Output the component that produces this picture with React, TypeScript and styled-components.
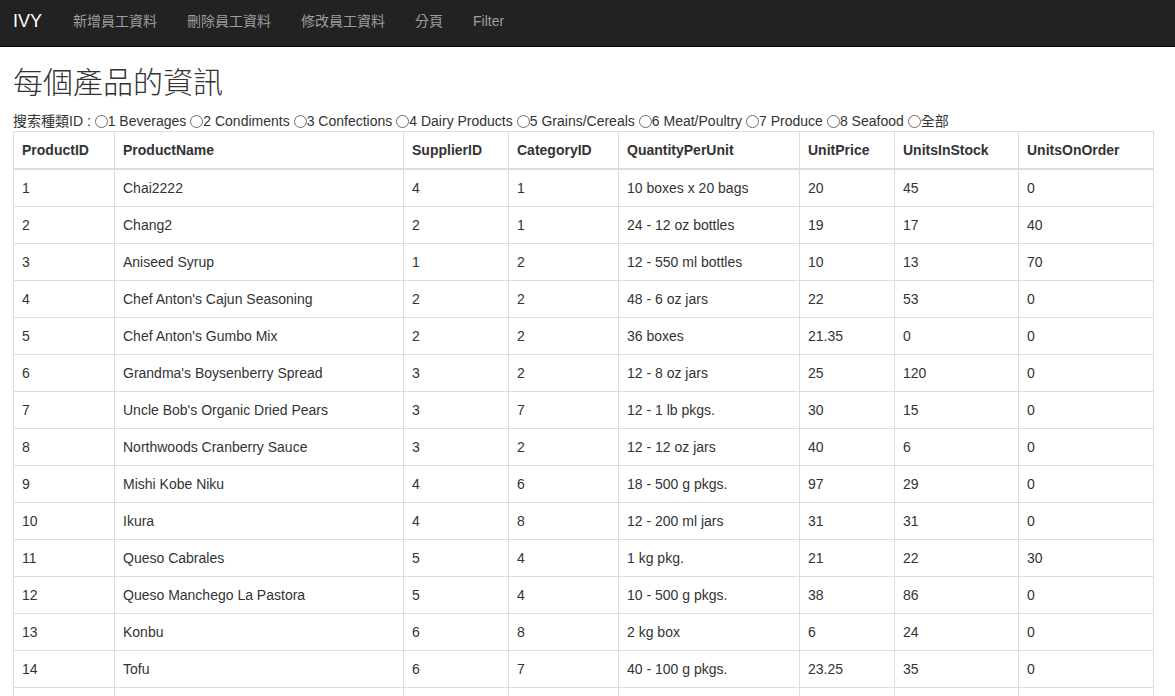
import React from "react";
import styled, { createGlobalStyle } from "styled-components";

const GlobalStyle = createGlobalStyle`
  html, body { margin: 0; padding: 0; background: #fff; }
  body {
    font-family: "Liberation Sans", Arial, "Noto Sans CJK TC", sans-serif;
    font-size: 14px;
    line-height: 1.42857;
    color: #333;
  }
  * { box-sizing: border-box; }
`;

const Navbar = styled.nav`
  height: 47px;
  background: #222;
  border-bottom: 1px solid #080808;
  display: flex;
  align-items: flex-start;
  padding-left: 13px;
`;

const Brand = styled.a`
  font-size: 18px;
  line-height: 20px;
  padding-top: 11px;
  color: #fff;
  text-decoration: none;
  margin-right: 16px;
`;

const NavLink = styled.a`
  font-size: 14px;
  line-height: 20px;
  padding: 11px 15px 0;
  color: #9d9d9d;
  text-decoration: none;
  font-family: "Liberation Sans", Arial, "Noto Sans CJK TC", sans-serif;
`;

const Content = styled.main`
  padding: 0 13px;
`;

const Title = styled.h1`
  margin: 17px 0 0;
  font-size: 30px;
  font-weight: 300;
  line-height: 33px;
  font-family: "Noto Sans CJK TC", sans-serif;
  color: #333;
`;

const FilterRow = styled.div`
  margin-top: 15px;
  height: 20px;
  display: flex;
  align-items: center;
  white-space: nowrap;
  font-size: 14px;
  color: #333;
`;

const Radio = styled.input.attrs({ type: "radio" })`
  appearance: none;
  -webkit-appearance: none;
  width: 13px;
  height: 13px;
  margin: 0;
  border: 1px solid #6b6b6b;
  border-radius: 50%;
  background: #fff;
  flex: none;
`;

const Option = styled.label`
  display: inline-flex;
  align-items: center;
  margin-right: 4px;
`;

const Table = styled.table`
  width: 1140px;
  border-collapse: collapse;
  table-layout: fixed;
  border: 1px solid #ddd;
  margin-top: -1px;
`;

const Th = styled.th`
  text-align: left;
  font-weight: 700;
  padding: 8px;
  line-height: 20px;
  border: 1px solid #ddd;
  border-bottom: 2px solid #ddd;
  color: #333;
`;

const Td = styled.td`
  padding: 8px;
  line-height: 20px;
  border: 1px solid #ddd;
  color: #333;
  white-space: nowrap;
`;

const widths = [101, 289, 105, 110, 181, 95, 124, 135];
const headers = [
  "ProductID",
  "ProductName",
  "SupplierID",
  "CategoryID",
  "QuantityPerUnit",
  "UnitPrice",
  "UnitsInStock",
  "UnitsOnOrder",
];

const rows: (string | number)[][] = [
  [1, "Chai2222", 4, 1, "10 boxes x 20 bags", "20", 45, 0],
  [2, "Chang2", 2, 1, "24 - 12 oz bottles", "19", 17, 40],
  [3, "Aniseed Syrup", 1, 2, "12 - 550 ml bottles", "10", 13, 70],
  [4, "Chef Anton's Cajun Seasoning", 2, 2, "48 - 6 oz jars", "22", 53, 0],
  [5, "Chef Anton's Gumbo Mix", 2, 2, "36 boxes", "21.35", 0, 0],
  [6, "Grandma's Boysenberry Spread", 3, 2, "12 - 8 oz jars", "25", 120, 0],
  [7, "Uncle Bob's Organic Dried Pears", 3, 7, "12 - 1 lb pkgs.", "30", 15, 0],
  [8, "Northwoods Cranberry Sauce", 3, 2, "12 - 12 oz jars", "40", 6, 0],
  [9, "Mishi Kobe Niku", 4, 6, "18 - 500 g pkgs.", "97", 29, 0],
  [10, "Ikura", 4, 8, "12 - 200 ml jars", "31", 31, 0],
  [11, "Queso Cabrales", 5, 4, "1 kg pkg.", "21", 22, 30],
  [12, "Queso Manchego La Pastora", 5, 4, "10 - 500 g pkgs.", "38", 86, 0],
  [13, "Konbu", 6, 8, "2 kg box", "6", 24, 0],
  [14, "Tofu", 6, 7, "40 - 100 g pkgs.", "23.25", 35, 0],
  [15, "Genen Shouyu", 6, 2, "24 - 250 ml bottles", "15.5", 39, 0],
];

const categories = [
  "1 Beverages",
  "2 Condiments",
  "3 Confections",
  "4 Dairy Products",
  "5 Grains/Cereals",
  "6 Meat/Poultry",
  "7 Produce",
  "8 Seafood",
  "全部",
];

export default function App() {
  return (
    <>
      <GlobalStyle />
      <Navbar>
        <Brand href="#">IVY</Brand>
        <NavLink href="#">新增員工資料</NavLink>
        <NavLink href="#">刪除員工資料</NavLink>
        <NavLink href="#">修改員工資料</NavLink>
        <NavLink href="#">分頁</NavLink>
        <NavLink href="#">Filter</NavLink>
      </Navbar>
      <Content>
        <Title>每個產品的資訊</Title>
        <FilterRow>
          <span>搜索種類ID :&nbsp;</span>
          {categories.map((c) => (
            <Option key={c}>
              <Radio name="cat" />
              <span>{c}</span>
            </Option>
          ))}
        </FilterRow>
        <Table>
          <colgroup>
            {widths.map((w, i) => (
              <col key={i} style={{ width: w }} />
            ))}
          </colgroup>
          <thead>
            <tr>
              {headers.map((h) => (
                <Th key={h}>{h}</Th>
              ))}
            </tr>
          </thead>
          <tbody>
            {rows.map((r) => (
              <tr key={r[0]}>
                {r.map((v, i) => (
                  <Td key={i}>{v}</Td>
                ))}
              </tr>
            ))}
          </tbody>
        </Table>
      </Content>
    </>
  );
}
